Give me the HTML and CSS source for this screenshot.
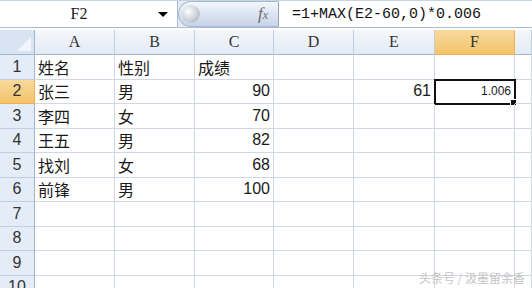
FILE: index.html
```html
<!DOCTYPE html>
<html lang="zh">
  <head>
    <meta charset="UTF-8" />
    <meta name="viewport" content="width=device-width, initial-scale=1.0" />
    <title>成绩表</title>
    <link rel="stylesheet" href="styles.css">
  </head>
  <body>
    <div class="formula-bar">
      <div class="name-box">
        <span class="cell-ref">F2</span>
        <span class="drop-arrow"></span>
      </div>
      <div class="fx-pill">
        <span class="knob"></span>
        <span class="fx">f<small>x</small></span>
      </div>
      <div class="formula">=1+MAX(E2-60,0)*0.006</div>
    </div>

    <div class="sheet">
      <div class="corner"></div>
      <div class="col-head">A</div>
      <div class="col-head">B</div>
      <div class="col-head">C</div>
      <div class="col-head">D</div>
      <div class="col-head">E</div>
      <div class="col-head active">F</div>
      <div class="col-head"></div>

      <div class="row-head">1</div>
      <div class="cell">姓名</div>
      <div class="cell">性别</div>
      <div class="cell">成绩</div>
      <div class="cell"></div>
      <div class="cell"></div>
      <div class="cell"></div>
      <div class="cell"></div>

      <div class="row-head active">2</div>
      <div class="cell">张三</div>
      <div class="cell">男</div>
      <div class="cell num">90</div>
      <div class="cell"></div>
      <div class="cell num">61</div>
      <div class="cell num small selected">1.006<span class="handle"></span></div>
      <div class="cell"></div>

      <div class="row-head">3</div>
      <div class="cell">李四</div>
      <div class="cell">女</div>
      <div class="cell num">70</div>
      <div class="cell"></div>
      <div class="cell"></div>
      <div class="cell"></div>
      <div class="cell"></div>

      <div class="row-head">4</div>
      <div class="cell">王五</div>
      <div class="cell">男</div>
      <div class="cell num">82</div>
      <div class="cell"></div>
      <div class="cell"></div>
      <div class="cell"></div>
      <div class="cell"></div>

      <div class="row-head">5</div>
      <div class="cell">找刘</div>
      <div class="cell">女</div>
      <div class="cell num">68</div>
      <div class="cell"></div>
      <div class="cell"></div>
      <div class="cell"></div>
      <div class="cell"></div>

      <div class="row-head">6</div>
      <div class="cell">前锋</div>
      <div class="cell">男</div>
      <div class="cell num">100</div>
      <div class="cell"></div>
      <div class="cell"></div>
      <div class="cell"></div>
      <div class="cell"></div>

      <div class="row-head">7</div>
      <div class="cell"></div>
      <div class="cell"></div>
      <div class="cell"></div>
      <div class="cell"></div>
      <div class="cell"></div>
      <div class="cell"></div>
      <div class="cell"></div>

      <div class="row-head">8</div>
      <div class="cell"></div>
      <div class="cell"></div>
      <div class="cell"></div>
      <div class="cell"></div>
      <div class="cell"></div>
      <div class="cell"></div>
      <div class="cell"></div>

      <div class="row-head">9</div>
      <div class="cell"></div>
      <div class="cell"></div>
      <div class="cell"></div>
      <div class="cell"></div>
      <div class="cell"></div>
      <div class="cell"></div>
      <div class="cell"></div>

      <div class="row-head">10</div>
      <div class="cell"></div>
      <div class="cell"></div>
      <div class="cell"></div>
      <div class="cell"></div>
      <div class="cell"></div>
      <div class="cell"></div>
      <div class="cell"></div>
    </div>

    <div class="watermark">头条号 / 汲墨留余香</div>
  </body>
</html>
```

FILE: styles.css
```css
body {
  margin: 0;
  width: 532px;
  height: 288px;
  overflow: hidden;
  background-color: #fff;
  font-family: "Noto Sans CJK SC", sans-serif;
  color: #1a1a1a;
  position: relative;
}
.formula-bar {
  display: flex;
  height: 28px;
  border-top: 1px solid #c5d3e6;
  border-bottom: 1px solid #a9bcd6;
  background-color: #e3ebf6;
  box-sizing: border-box;
  margin-bottom: 2px;
}
.name-box {
  width: 178px;
  display: flex;
  align-items: center;
  background-color: #fff;
  border-right: 1px solid #a9bcd6;
  box-sizing: border-box;
}
.cell-ref {
  width: 158px;
  text-align: center;
  font-family: "Liberation Serif", serif;
  font-size: 16px;
}
.drop-arrow {
  width: 0;
  height: 0;
  border-left: 5px solid transparent;
  border-right: 5px solid transparent;
  border-top: 5px solid #000;
}
.fx-pill {
  width: 101px;
  display: flex;
  align-items: center;
  justify-content: space-between;
  padding: 0 10px 0 3px;
  box-sizing: border-box;
  border-radius: 13px 0 0 13px;
  border: 1px solid #a8b9cf;
  border-right-color: #8ea4c1;
  background: linear-gradient(#f4f7fc, #d9e3f1 55%, #c6d4e8);
}
.knob {
  width: 18px;
  height: 18px;
  border-radius: 50%;
  background: radial-gradient(circle at 35% 35%, #fdfdfd, #c5ccd6 60%, #aab4c2);
}
.fx {
  font-family: "Liberation Serif", serif;
  font-style: italic;
  font-size: 17px;
  color: #6b6b6b;
}
.fx small {
  font-size: 12px;
}
.formula {
  flex: 1;
  background-color: #fff;
  padding-left: 13px;
  display: flex;
  align-items: center;
  font-family: "Liberation Mono", monospace;
  font-size: 15px;
  color: #111;
}
.sheet {
  display: grid;
  grid-template-columns: 35px 80px 80px 79px 80px 81px 80px 17px;
  grid-template-rows: 25px repeat(10, 24.5px);
}
.corner {
  background-color: #d9e4f2;
  border-right: 1px solid #9eb6ce;
  border-bottom: 1px solid #9eb6ce;
  position: relative;
}
.corner::after {
  content: "";
  position: absolute;
  right: 3px;
  bottom: 3px;
  border-left: 14px solid transparent;
  border-bottom: 14px solid #f2f5fa;
}
.col-head {
  background: linear-gradient(#f4f7fb, #e3eaf4);
  border-right: 1px solid #c0cfe0;
  border-bottom: 1px solid #9eb6ce;
  display: flex;
  align-items: center;
  justify-content: center;
  font-family: "Liberation Serif", serif;
  font-size: 16px;
  color: #333;
}
.row-head {
  background-color: #e4ecf7;
  border-right: 1px solid #9eb6ce;
  border-bottom: 1px solid #c0cfe0;
  display: flex;
  align-items: center;
  justify-content: center;
  font-family: "Liberation Sans", sans-serif;
  font-size: 16px;
  color: #333;
}
.col-head.active,
.row-head.active {
  background: linear-gradient(#f9d99d, #f2c46a);
  border-color: #f2b04f;
}
.cell {
  border-right: 1px solid #d0d7e5;
  border-bottom: 1px solid #d0d7e5;
  display: flex;
  align-items: center;
  padding: 0 3px;
  font-size: 16px;
  position: relative;
}
.cell.num {
  justify-content: flex-end;
  font-family: "Liberation Sans", sans-serif;
  font-size: 16px;
}
.cell.small {
  font-size: 12px;
}
.selected {
  outline: 2px solid #111;
  outline-offset: -1px;
}
.handle {
  position: absolute;
  right: -3px;
  bottom: -3px;
  width: 5px;
  height: 5px;
  background-color: #111;
  border: 1px solid #fff;
}
.watermark {
  position: absolute;
  right: 7px;
  bottom: 2px;
  font-size: 12px;
  color: #c4c4c4;
}
```
